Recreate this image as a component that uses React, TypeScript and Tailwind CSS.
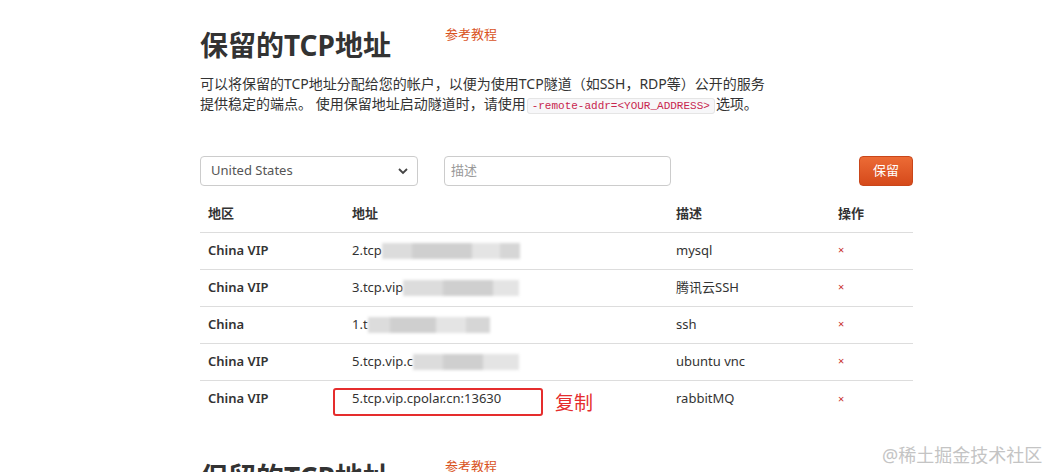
import React from "react";

const rows = [
  { region: "China VIP", shown: "2.tcp", blur: [30, 60, 28, 20], desc: "mysql" },
  { region: "China VIP", shown: "3.tcp.vip", blur: [40, 50, 26], desc: "腾讯云SSH" },
  { region: "China", shown: "1.t", blur: [22, 46, 30, 24], desc: "ssh" },
  { region: "China VIP", shown: "5.tcp.vip.c", blur: [30, 40, 36], desc: "ubuntu vnc" },
];

function Blurred({ widths }: { widths: number[] }) {
  const shades = ["bg-[#dcdcdc]", "bg-[#cfcfcf]", "bg-[#e4e4e4]", "bg-[#d6d6d6]"];
  return (
    <span className="inline-flex h-[16px] align-middle blur-[1.5px]">
      {widths.map((w, i) => (
        <span key={i} className={shades[i % shades.length]} style={{ width: w }} />
      ))}
    </span>
  );
}

function Header() {
  return (
    <div className="flex items-start">
      <h2 className="w-[245px] text-[28px] leading-[40px] font-bold text-[#333]">
        保留的TCP地址
      </h2>
      <a className="mt-[-1px] text-[13px] leading-[20px] text-[#d9531e]">参考教程</a>
    </div>
  );
}

export default function App() {
  return (
    <div
      className="relative h-[472px] overflow-hidden bg-white"
      style={{ fontFamily: '"Noto Sans", "Noto Sans CJK SC", sans-serif' }}
    >
      <div className="ml-[200px] w-[713px] pt-[25px]">
        <Header />

        <p className="mt-[9px] text-[14px] leading-[20px] text-[#333]">
          可以将保留的TCP地址分配给您的帐户，以便为使用TCP隧道（如SSH，RDP等）公开的服务
          <br />
          提供稳定的端点。 使用保留地址启动隧道时，请使用
          <code className="mx-[1px] rounded-[3px] border border-[#e5e5e5] bg-[#f7f7f9] px-[4px] py-[1px] text-[11px] text-[#c7254e] font-['Liberation_Mono',monospace]">
            -remote-addr=&lt;YOUR_ADDRESS&gt;
          </code>
          选项。
        </p>

        {/* form */}
        <div className="mt-[40px] flex items-center">
          <div className="relative flex h-[30px] w-[218px] items-center rounded-[4px] border border-[#ccc] bg-white pl-[10px] text-[13px] text-[#555]">
            United States
            <svg className="absolute right-[9px] top-[11px]" width="10" height="7" viewBox="0 0 10 7">
              <path d="M1 1l4 4 4-4" fill="none" stroke="#444" strokeWidth="1.8" />
            </svg>
          </div>
          <div className="ml-[26px] flex h-[30px] w-[227px] items-center rounded-[4px] border border-[#ccc] bg-white pl-[6px] text-[13px] text-[#999]">
            描述
          </div>
          <button className="ml-auto h-[30px] w-[54px] rounded-[4px] border border-[#c9461a] bg-gradient-to-b from-[#ec6b35] to-[#d5491a] text-[13px] text-white">
            保留
          </button>
        </div>

        {/* table */}
        <table className="mt-[10px] w-full border-collapse text-[13px] text-[#333]">
          <thead>
            <tr className="h-[36px] border-b border-[#ddd] text-left">
              <th className="w-[144px] px-[8px] font-bold">地区</th>
              <th className="w-[324px] px-[8px] font-bold">地址</th>
              <th className="w-[162px] px-[8px] font-bold">描述</th>
              <th className="px-[8px] font-bold">操作</th>
            </tr>
          </thead>
          <tbody>
            {rows.map((r, i) => (
              <tr key={i} className="h-[37px] border-b border-[#ddd]">
                <td className="px-[8px] font-semibold">{r.region}</td>
                <td className="px-[8px] whitespace-nowrap">
                  {r.shown}
                  <Blurred widths={r.blur} />
                </td>
                <td className="px-[8px]">{r.desc}</td>
                <td className="px-[8px] text-[11px] text-[#c9302c]">×</td>
              </tr>
            ))}
            <tr className="h-[37px]">
              <td className="px-[8px] font-semibold">China VIP</td>
              <td className="relative px-[8px]">
                5.tcp.vip.cpolar.cn:13630
                <span className="absolute left-[-11px] top-[7px] h-[28px] w-[210px] rounded-[3px] border-2 border-[#e52d2d]" />
                <span className="absolute left-[211px] top-[10px] text-[19px] leading-[24px] text-[#e52d2d]">
                  复制
                </span>
              </td>
              <td className="px-[8px]">rabbitMQ</td>
              <td className="px-[8px] text-[11px] text-[#c9302c]">×</td>
            </tr>
          </tbody>
        </table>

        <div className="mt-[15px] pt-[25px]">
          <Header />
        </div>
      </div>

      <div className="absolute left-[882px] top-[443px] text-[18px] leading-[24px] text-[#c4c4c4]">
        @稀土掘金技术社区
      </div>
    </div>
  );
}
